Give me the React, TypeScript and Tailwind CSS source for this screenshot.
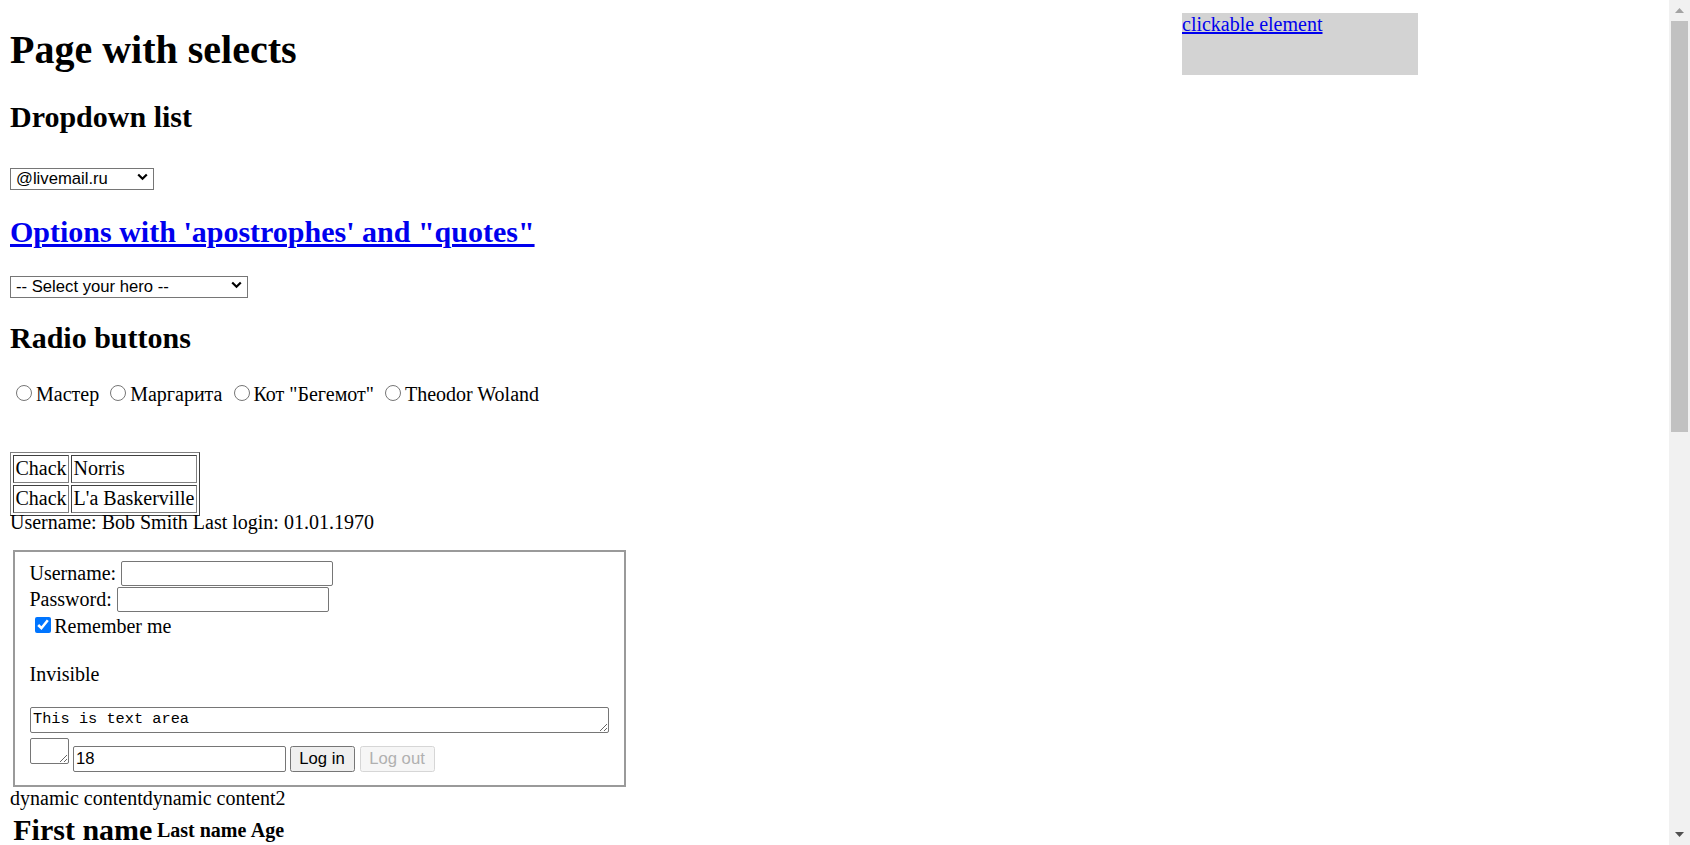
import { useState } from "react";

const domains = ["@livemail.ru", "@myrambler.ru", "@rusmail.ru", "@мыло.ру"];
const heroes = [
  { value: "", label: "-- Select your hero --" },
  { value: "john mc'lain", label: "John Mc'Lain" },
  { value: "arnold \"schwarzenegger\"", label: "Arnold \"Schwarzenegger\"" },
  { value: "mickey \"rock'n'roll\" rourke", label: "Mickey \"Rock'n'Roll\" Rourke" },
];
const radios = [
  { value: "master", label: "Мастер" },
  { value: "margarita", label: "Маргарита" },
  { value: "cat", label: "Кот \"Бегемот\"" },
  { value: "woland", label: "Theodor Woland" },
];
const users = [
  ["Bob", "Smith", "33"],
  ["John", "Doe", "41"],
  ["Jane", "Roe", "29"],
];

const sans = "font-['Liberation_Sans',Arial,sans-serif]";
const cell = "border border-t-[#404040] border-l-[#404040] border-r-[#808080] border-b-[#808080] p-[1.5px]";

function Chevron() {
  return (
    <svg className="pointer-events-none absolute right-[6px] top-[7px]" width="11" height="8" viewBox="0 0 11 8">
      <path d="M1.2 1.5 L5.5 5.8 L9.8 1.5" fill="none" stroke="#000" strokeWidth="2.2" />
    </svg>
  );
}

function Scrollbar() {
  return (
    <div className="flex w-[21px] shrink-0 flex-col bg-[#f1f1f1]">
      <div className="flex h-[21px] items-center justify-center">
        <svg width="9" height="5" viewBox="0 0 9 5">
          <path d="M0 5 L4.5 0 L9 5 Z" fill="#a3a3a3" />
        </svg>
      </div>
      <div className="mx-[2px] h-[411px] bg-[#c1c1c1]" />
      <div className="flex-1" />
      <div className="flex h-[21px] items-center justify-center">
        <svg width="9" height="5" viewBox="0 0 9 5">
          <path d="M0 0 L4.5 5 L9 0 Z" fill="#505050" />
        </svg>
      </div>
    </div>
  );
}

export default function App() {
  const [domain, setDomain] = useState("@livemail.ru");
  const [hero, setHero] = useState("");
  const [me, setMe] = useState("");
  const [remember, setRemember] = useState(true);
  const [age, setAge] = useState("18");

  return (
    <div className="flex h-screen overflow-hidden bg-white font-['Liberation_Serif','Times_New_Roman',serif] text-[20px] leading-[normal] text-black">
      <main className="relative flex-1 overflow-hidden">
        <div className="absolute left-[1182px] top-[13px] h-[62px] w-[236px] bg-[#d3d3d3]">
          <a href="#" className="text-[#0000ee] underline">clickable element</a>
        </div>

        <div className="px-[10px] pb-px">
          <h1 className="my-[26.8px] text-[40px] font-bold leading-[46px]">Page with selects</h1>

          <h2 className="my-[24.9px] text-[30px] font-bold leading-[34.5px]">Dropdown list</h2>
          <div className="mt-[32px] flex">
            <div className="relative">
              <select
                value={domain}
                onChange={(e) => setDomain(e.target.value)}
                className={`${sans} h-[22px] w-[144px] appearance-none rounded-none border border-[#767676] bg-white pl-[5px] text-[16.67px] leading-[20px] text-black`}
              >
                {domains.map((d) => (
                  <option key={d} value={d}>{d}</option>
                ))}
              </select>
              <Chevron />
            </div>
          </div>

          <h2 className="my-[24.9px] text-[30px] font-bold leading-[34.5px]">
            <a href="#" className="text-[#0000ee] underline">Options with 'apostrophes' and "quotes"</a>
          </h2>
          <div className="mt-[25px] flex">
            <div className="relative">
              <select
                value={hero}
                onChange={(e) => setHero(e.target.value)}
                className={`${sans} h-[22px] w-[238px] appearance-none rounded-none border border-[#767676] bg-white pl-[5px] text-[16.67px] leading-[20px] text-black`}
              >
                {heroes.map((h) => (
                  <option key={h.label} value={h.value}>{h.label}</option>
                ))}
              </select>
              <Chevron />
            </div>
          </div>

          <h2 className="mt-[23px] mb-[24.9px] text-[30px] font-bold leading-[34.5px]">Radio buttons</h2>
          <div>
            {radios.map((r) => (
              <span key={r.value}>
                <label>
                  <input
                    type="radio"
                    name="me"
                    value={r.value}
                    checked={me === r.value}
                    onChange={() => setMe(r.value)}
                    className="mt-[3.75px] mr-[3.75px] ml-[6.25px] h-[16px] w-[16px]"
                  />
                  {r.label}
                </label>{" "}
              </span>
            ))}
          </div>

          <table className="mt-[46px] border-separate border-spacing-[2px] border border-t-[#808080] border-l-[#808080] border-r-[#404040] border-b-[#404040]">
            <tbody>
              <tr>
                <td className={cell}>Chack</td>
                <td className={cell}>Norris</td>
              </tr>
              <tr>
                <td className={cell}>Chack</td>
                <td className={cell}>L'a Baskerville</td>
              </tr>
            </tbody>
          </table>

          <div className="-mt-[4.5px]">
            Username: <span>Bob Smith</span> Last login: <span>01.01.1970</span>
          </div>

          <form className="mt-[15.7px]" onSubmit={(e) => e.preventDefault()}>
            <fieldset className="mx-[2.5px] w-[611px] border-2 border-[#9a9a9a] px-[15px] pt-[9px] pb-[12.5px]">
              <div className="flex h-[26px] items-center">
                Username:&nbsp;
                <input className={`${sans} h-[25px] w-[212px] rounded-[2px] border border-[#767676] px-[2.5px] text-[16.67px]`} />
              </div>
              <div className="flex h-[26px] items-center">
                Password:&nbsp;
                <input type="password" className={`${sans} h-[25px] w-[212px] rounded-[2px] border border-[#767676] px-[2.5px] text-[16.67px]`} />
              </div>
              <div>
                <label>
                  <input
                    type="checkbox"
                    checked={remember}
                    onChange={(e) => setRemember(e.target.checked)}
                    className="mt-[3.75px] mr-[3.75px] mb-[3.75px] ml-[5px] h-[16px] w-[16px]"
                  />
                  Remember me
                </label>
              </div>
              <p className="mt-[25.4px] mb-[20px]">Invisible</p>
              <div className="pt-[1.5px]">
                <textarea
                  defaultValue="This is text area"
                  className="block h-[26px] w-[579px] resize rounded-[2px] border border-[#767676] px-[2.5px] py-[2px] font-['Liberation_Mono','Courier_New',monospace] text-[15.3px] leading-[19px]"
                />
              </div>
              <div className="mt-[5px] flex items-start">
                <textarea className="block h-[26px] w-[39px] resize rounded-[2px] border border-[#767676]" />
                <input
                  value={age}
                  onChange={(e) => setAge(e.target.value)}
                  className={`${sans} mt-[8px] ml-[4px] h-[26px] w-[213px] rounded-[2px] border border-[#767676] px-[2.5px] text-[16.67px]`}
                />
                <button className={`${sans} mt-[8px] ml-[4px] h-[26px] w-[65px] rounded-[2.5px] border border-[#767676] bg-[#efefef] text-[16.67px] text-black`}>
                  Log in
                </button>
                <button disabled className={`${sans} mt-[8px] ml-[5px] h-[26px] w-[75px] rounded-[2.5px] border border-[#d6d6d6] bg-[#f6f6f6] text-[16.67px] text-[#b0b0b0]`}>
                  Log out
                </button>
              </div>
            </fieldset>
          </form>

          <div>
            <span>dynamic content</span>
            <span>dynamic content2</span>
          </div>

          <table className="border-separate border-spacing-[2.5px]">
            <thead>
              <tr>
                <th className="p-[1.25px] align-middle text-[30px] font-bold leading-[34.5px]">First name</th>
                <th className="p-[1.25px] align-middle font-bold">Last name</th>
                <th className="p-[1.25px] align-middle font-bold">Age</th>
              </tr>
            </thead>
            <tbody>
              {users.map((u) => (
                <tr key={u[0]}>
                  {u.map((c) => (
                    <td key={c} className="p-[1.25px]">{c}</td>
                  ))}
                </tr>
              ))}
            </tbody>
          </table>
        </div>
      </main>
      <Scrollbar />
    </div>
  );
}
